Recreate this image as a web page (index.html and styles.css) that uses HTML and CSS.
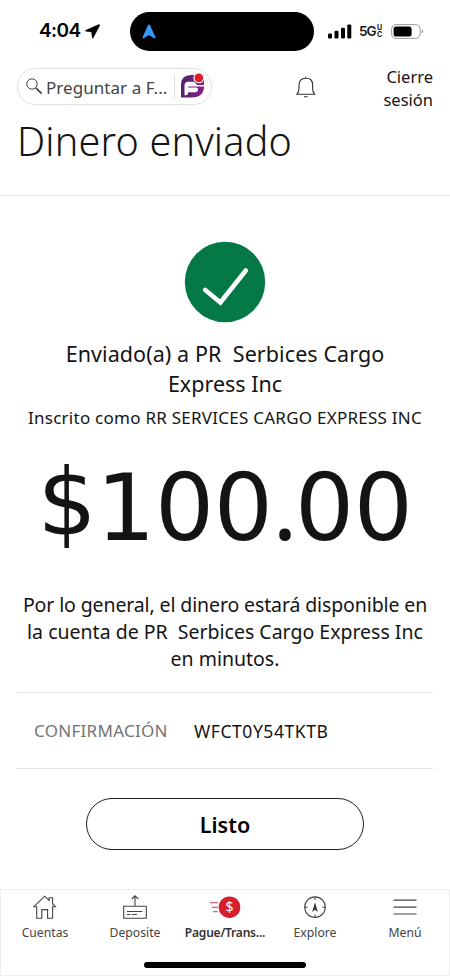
FILE: index.html
```html
<!DOCTYPE html>
<html lang="es">
<head>
<meta charset="utf-8">
<title>Dinero enviado</title>
<link rel="stylesheet" href="styles.css">
</head>
<body>
<div class="screen">
  <div class="status">
    <span class="time">4:04</span>
    <svg class="location" width="15" height="15" viewBox="0 0 15 15"><path d="M13.8 .6.8 6.3q-1 .6.2.9l5.6.7.7 5.9q.3 1 .9 0L14.7 1.5q.2-1.2-.9-.9Z" stroke="#000" stroke-width=".5"/></svg>
    <div class="island"><svg width="14" height="15" viewBox="0 0 14 15"><path d="M6 1Q7 0 8 1l5.5 12.5q0 1-1 .9L7 11 1.5 14.4q-1 .1-1-.9Z" fill="#3699fb"/></svg></div>
    <svg class="signal" width="24" height="15" viewBox="0 0 24 15"><rect x="0" y="9.5" width="4" height="5" rx="1.2"/><rect x="6.5" y="6.7" width="4" height="7.8" rx="1.2"/><rect x="13" y="3.8" width="4" height="10.7" rx="1.2"/><rect x="19.3" y=".5" width="4" height="14" rx="1.2"/></svg>
    <span class="network">5G</span>
    <span class="carrier"><span>U</span><span>C</span></span>
    <svg class="battery" width="33" height="15" viewBox="0 0 33 15"><rect x=".6" y=".6" width="28.5" height="13.8" rx="4.5" fill="none" stroke="#999"/><rect x="2.6" y="2.4" width="18" height="10.2" rx="2.6"/><path d="M30.8 5.2q2.5 2.3 0 4.6Z" fill="#888"/></svg>
  </div>

  <header class="header">
    <div class="search">
      <svg class="lens" width="17" height="17" viewBox="0 0 17 17" fill="none" stroke="#444"><circle cx="6" cy="6" r="5.2"/><path d="m9.8 9.8 5.8 5.8" stroke-width="1.7"/></svg>
      <span class="ask">Preguntar a F...</span>
      <span class="divider"></span>
      <svg class="fargo" width="26" height="26" viewBox="0 0 26 26"><defs><linearGradient id="purple"><stop stop-color="#4d246f"/><stop offset="1" stop-color="#8b2085"/></linearGradient></defs><path d="M1 24.4V12Q1 2 11 2H24v11Q24 24.4 12 24.4Z" fill="url(#purple)"/><path d="M4.5 12.6q0-3.8 3.8-3.8H14l3 3.2h7.2v1.4H9q-1.2 0-1.2 1.2h8.6q1.6 0 1.6 1.6 0 3-3 3H8v1q0 2-2 2H4.5Z" fill="#fff"/><circle cx="18.8" cy="4.9" r="5.4" fill="#fff"/><circle cx="18.8" cy="4.9" r="4.3" fill="#e21b25"/></svg>
    </div>
    <svg class="bell" width="20" height="23" viewBox="0 0 20 23" fill="none" stroke="#303030" stroke-width="1.1"><path d="M1 18.2q2-2.2 2-6V9q0-6.5 6.8-6.8T16.6 9v3.2q0 3.8 2 6ZM1 18.2h17.6M9.8.8v1.4M8 20.8h3.7"/></svg>
    <div class="logout">Cierre<br>sesión</div>
  </header>

  <h1 class="title">Dinero enviado</h1>

  <main class="content">
    <svg class="check" width="82" height="82" viewBox="0 0 82 82"><circle cx="41" cy="41" r="40.2" fill="#047946"/><path d="m21.2 49 15.2 12.5L61.8 29.5" fill="none" stroke="#fff" stroke-width="4.6" stroke-linecap="round"/></svg>
    <h2 class="recipient"><span class="recipient-first">Enviado(a) a PR&nbsp; Serbices Cargo</span><br>Express Inc</h2>
    <p class="enrolled">Inscrito como RR SERVICES CARGO EXPRESS INC</p>
    <div class="amount"><span class="dollar">$</span>100<span class="dot">.</span>00</div>
    <p class="note"><span class="note-first">Por lo general, el dinero estará disponible en</span><br><span class="note-second">la cuenta de PR&nbsp; Serbices Cargo Express Inc</span><br>en minutos.</p>
    <div class="confirmation"><span class="label">CONFIRMACIÓN</span><span class="code">WFCT0Y54TKTB</span></div>
    <button class="done">Listo</button>
  </main>

  <nav class="tabs">
    <div class="tab"><svg width="24" height="25" viewBox="0 0 24 25" fill="none" stroke="#444" stroke-width="1.1"><path d="M1 11.7 11.7 1.2l4.4 4.3V2.7h3.5v6.2l2.8 2.8h-2.8v11.6h-5v-8.7H8.8v8.7H3.7V11.7Z"/></svg><span>Cuentas</span></div>
    <div class="tab"><svg width="24" height="25" viewBox="0 0 24 25" fill="none" stroke="#444" stroke-width="1.1"><path d="M.7 11.3h22.6v12H.7ZM12 11.3V1M8.8 4 12 .8 15.2 4M4 16.5h15.5M4 19.5h3.5M9 19.5h5"/></svg><span>Deposite</span></div>
    <div class="tab active"><svg width="32" height="25" viewBox="0 0 32 25"><path d="M1 7.8h8M3 12.2h6M4 16.7h5" stroke="#b8444d" stroke-width="1.1"/><circle cx="20.5" cy="12.2" r="10.8" fill="#d71e2b"/><text class="coin" x="20.5" y="17.3" text-anchor="middle">$</text></svg><span>Pague/Trans...</span></div>
    <div class="tab"><svg width="24" height="25" viewBox="0 0 24 25" fill="none" stroke="#444" stroke-width="1.1"><circle cx="12" cy="12.2" r="10.3"/><path d="M12 2v3M12 19.5v3M1.7 12.2h3M19.3 12.2h3"/><path d="m12 7.3 2.8 9.6-2.8-2.2-2.8 2.2Z" fill="#333" stroke="none"/></svg><span>Explore</span></div>
    <div class="tab"><svg width="24" height="25" viewBox="0 0 24 25" stroke="#444" stroke-width="1.2"><path d="M.5 5.2h23M.5 12.2h23M.5 19h23"/></svg><span>Menú</span></div>
    <div class="home-bar"></div>
  </nav>
</div>
</body>
</html>
```

FILE: styles.css
```css
* { box-sizing: border-box; }
body {
  margin: 0;
  background: #fff;
  color: #141414;
  font-family: "Noto Sans", sans-serif;
}
h1, h2, p { margin: 0; font-weight: 400; }
svg { display: block; flex: none; }
.screen {
  width: 450px;
  height: 976px;
  display: flex;
  flex-direction: column;
  overflow: hidden;
  white-space: nowrap;
}
.status {
  height: 62px;
  flex: none;
  display: flex;
  align-items: center;
  padding-left: 39px;
}
.time {
  width: 41px;
  font: 600 19px/24px Inter, sans-serif;
  letter-spacing: -0.6px;
  color: #000;
}
.location { margin-left: 5px; }
.island {
  width: 184px;
  height: 39px;
  margin-left: 30px;
  padding-left: 12px;
  border-radius: 20px;
  background: #000;
  display: flex;
  align-items: center;
}
.signal { margin-left: 14px; }
.network {
  width: 18px;
  margin-left: 7px;
  font: 600 13.5px/18px Inter, sans-serif;
  letter-spacing: -0.9px;
}
.carrier {
  width: 7px;
  display: flex;
  flex-direction: column;
  font: 700 7px/7px Inter, sans-serif;
}
.battery { margin-left: 7px; }
.header {
  height: 54px;
  flex: none;
  display: flex;
  align-items: flex-start;
  padding: 0 17px;
}
.search {
  width: 195px;
  height: 37px;
  margin-top: 6px;
  border: 1px solid #e2e2e2;
  border-radius: 19px;
  box-shadow: 0 0 2px #eee;
  display: flex;
  align-items: center;
  padding-left: 8px;
}
.ask {
  width: 123px;
  margin: 1px 0 0 3px;
  font-size: 17px;
  letter-spacing: 0.05px;
  color: #444;
}
.divider {
  width: 1px;
  height: 25px;
  margin-left: 5px;
  background: #ddd;
}
.fargo { margin: 0 0 1px 5px; }
.bell { margin: 14px 0 0 84px; }
.logout {
  margin: 3px 0 0 auto;
  font-size: 16.5px;
  line-height: 23px;
  text-align: right;
}
.title {
  height: 80px;
  flex: none;
  padding-left: 17px;
  border-bottom: 1px solid #e2e2e2;
  font-size: 39.5px;
  font-weight: 300;
  letter-spacing: 0.2px;
  line-height: 50px;
}
.content {
  height: 693px;
  flex: none;
  display: flex;
  flex-direction: column;
  align-items: center;
  padding-top: 45px;
}
.recipient {
  margin-top: 16px;
  font-size: 21.5px;
  line-height: 30px;
  text-align: center;
}
.recipient-first { letter-spacing: 0.08px; }
.enrolled {
  margin-top: 7px;
  font-size: 17px;
  letter-spacing: 0.25px;
  line-height: 24px;
}
.amount {
  height: 120px;
  margin-top: 18px;
  font: 93px/120px "DejaVu Sans", sans-serif;
  letter-spacing: -0.4px;
}
.dollar { vertical-align: 5px; line-height: 1; }
.dot { font-family: "Noto Sans", sans-serif; line-height: 1; letter-spacing: -2.5px; }
.note {
  margin-top: 23px;
  font-size: 19.5px;
  line-height: 27px;
  text-align: center;
}
.note-first { letter-spacing: -0.12px; }
.confirmation {
  width: 416px;
  height: 77px;
  flex: none;
  margin-top: 20px;
  padding-left: 17px;
  border-top: 1px solid #e2e2e2;
  border-bottom: 1px solid #e2e2e2;
  display: flex;
  align-items: center;
  font-size: 17px;
}
.label { width: 160px; letter-spacing: 0.28px; color: #747474; }
.code { font-size: 17.5px; letter-spacing: 0.55px; }
.done {
  width: 278px;
  height: 52px;
  flex: none;
  margin-top: 29px;
  padding: 2px 0 0;
  border: 1px solid #222;
  border-radius: 26px;
  background: #fff;
  color: #000;
  font: 600 21.5px/30px "Noto Sans", sans-serif;
}
.tabs {
  height: 87px;
  flex: none;
  border: 1px solid #eee;
  display: grid;
  grid-template-columns: repeat(5, 90px);
  justify-content: center;
  grid-template-rows: 72px 6px;
}
.tab {
  display: flex;
  flex-direction: column;
  align-items: center;
  padding-top: 5px;
  font-size: 12.2px;
  line-height: 18px;
  color: #444;
}
.tab span { margin-top: 4px; }
.active { font-weight: 600; font-size: 12px; letter-spacing: -0.2px; color: #333; }
.coin { font: 400 14px "Noto Sans", sans-serif; letter-spacing: 0; fill: #fff; }
.home-bar {
  grid-column: 1 / -1;
  justify-self: center;
  width: 162px;
  height: 6px;
  border-radius: 3px;
  background: #000;
}
```
